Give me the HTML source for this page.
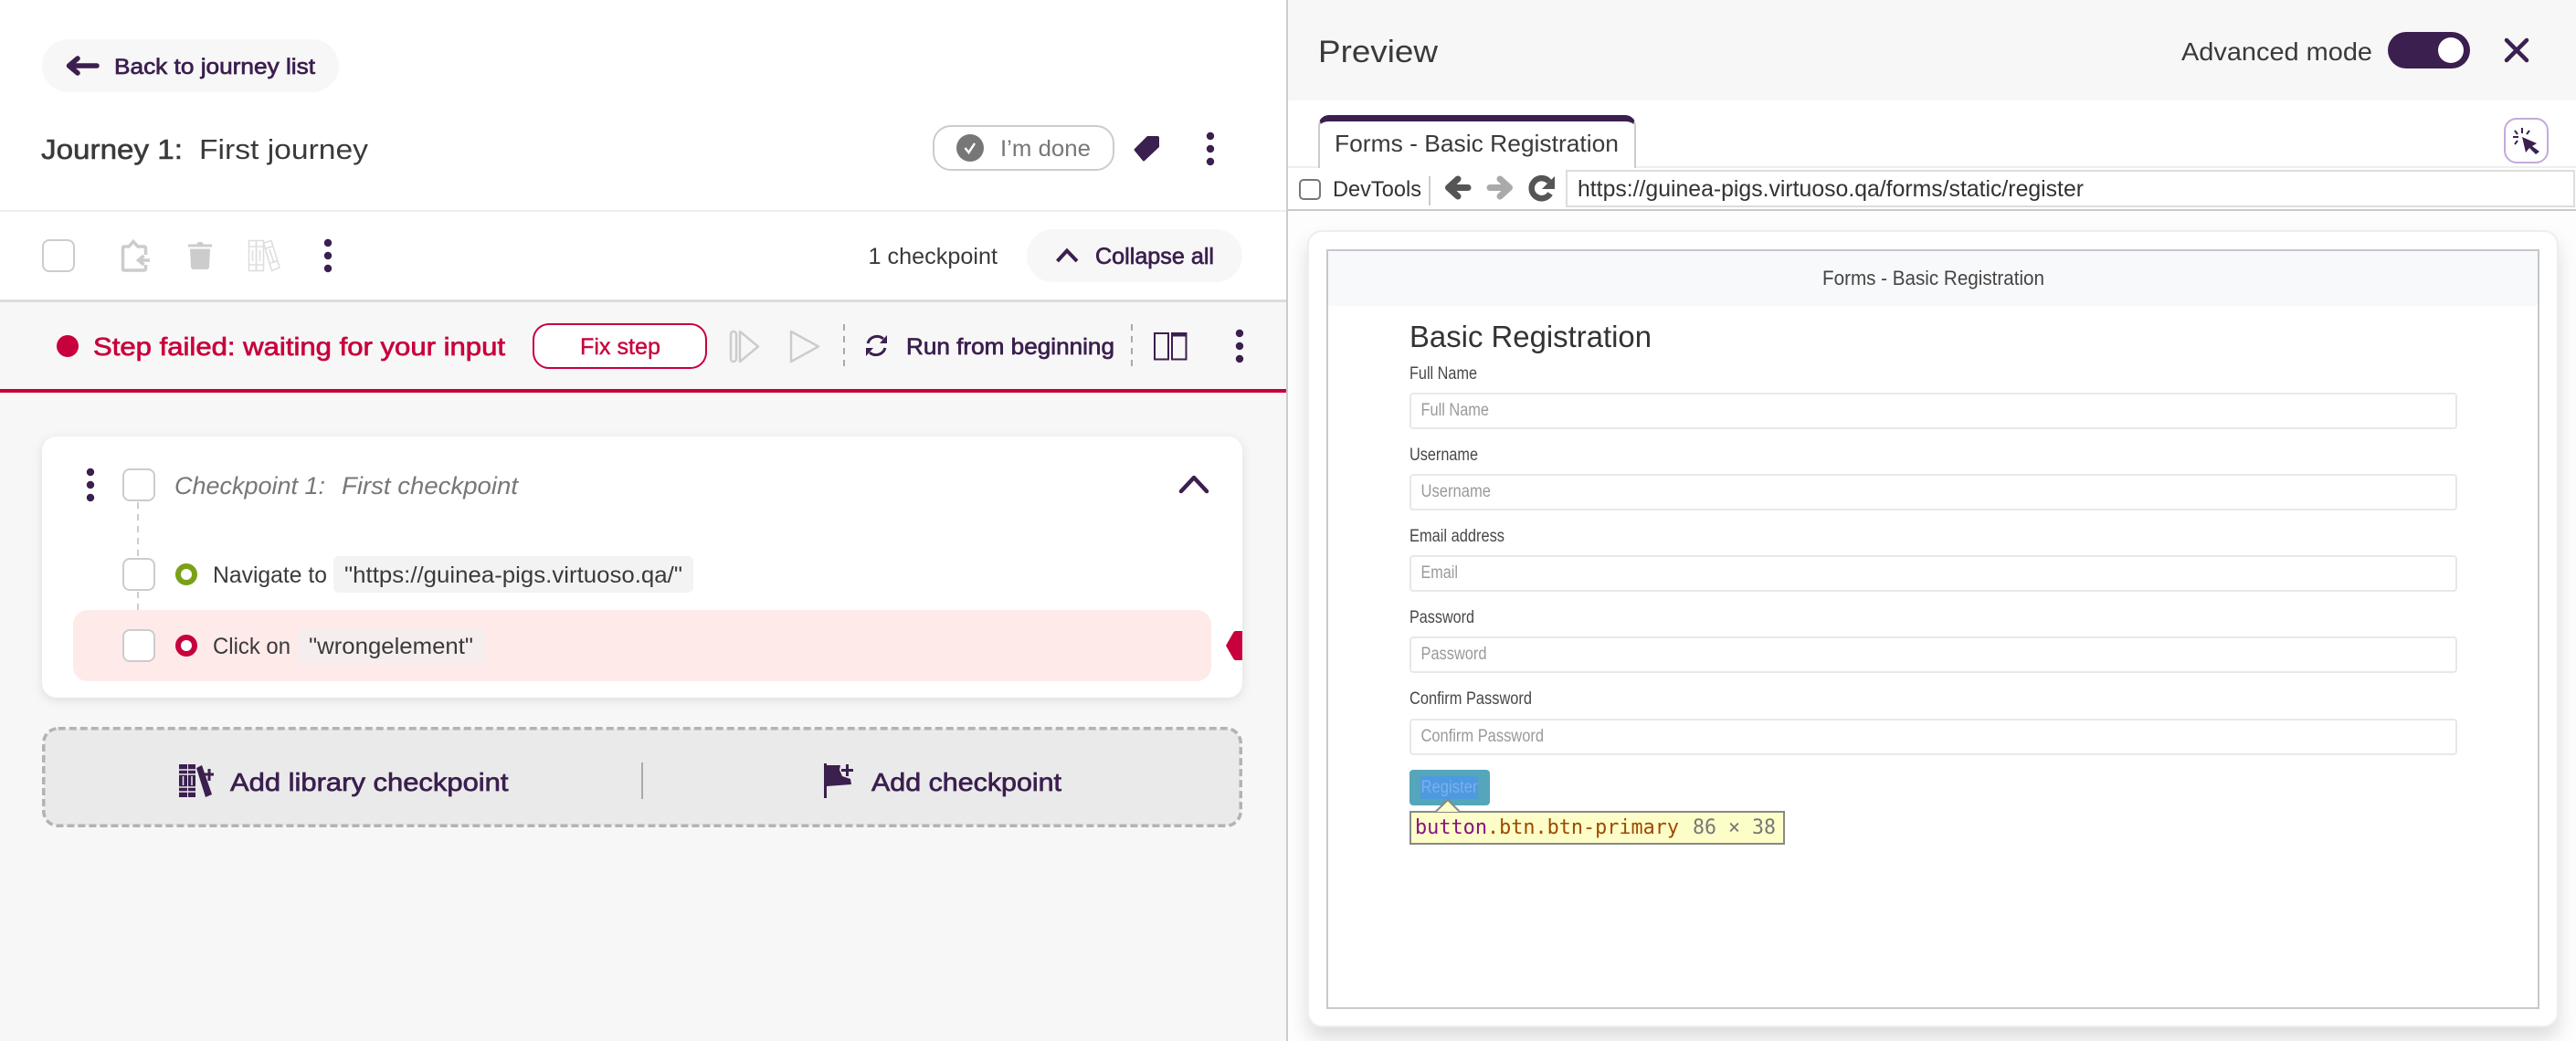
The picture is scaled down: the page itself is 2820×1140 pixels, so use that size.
<!DOCTYPE html>
<html><head><meta charset="utf-8"><title>Journey</title>
<style>
html,body{margin:0;padding:0;background:#f7f7f7}
body{width:2820px;height:1140px;position:relative;overflow:hidden;font-family:"Liberation Sans",sans-serif}
.b{position:absolute;box-sizing:border-box}
svg{position:absolute;left:0;top:0}
text{font-family:"Liberation Sans",sans-serif;white-space:pre}
.p{fill:#3b1f4f}.d{fill:#3a3a3a}.g{fill:#777}.r{fill:#c8003c}
.sp{stroke:#3b1f4f;stroke-width:.7}.sd{stroke:#3a3a3a;stroke-width:.6}.sr{stroke:#c8003c;stroke-width:.7}
.f{fill:#484848;font-size:19px}.h{fill:#9a9a9a;font-size:19px}
.m{font-family:"DejaVu Sans Mono",monospace;font-size:22px}
.cb{border:2.5px solid #ccc;border-radius:8px;background:#fff;width:36px;height:36px}
.inp{left:1543px;width:1147px;height:40px;border:2px solid #e8e8e8;border-radius:4px;background:#fff}
</style></head><body>
<!-- left -->
<div class="b" style="left:0;top:0;width:1408px;height:328px;background:#fff"></div>
<div class="b" style="left:0;top:230px;width:1408px;height:2px;background:#eee"></div>
<div class="b" style="left:0;top:328px;width:1408px;height:3px;background:#ddd"></div>
<div class="b" style="left:0;top:426px;width:1408px;height:4px;background:#c8003c"></div>
<div class="b" style="left:46px;top:43px;width:325px;height:58px;border-radius:29px;background:#f7f7f7"></div>
<div class="b" style="left:1021px;top:137px;width:199px;height:50px;border:2.5px solid #ccc;border-radius:20px;background:#fff"></div>
<div class="b cb" style="left:46px;top:262px"></div>
<div class="b" style="left:1124px;top:251px;width:236px;height:58px;border-radius:29px;background:#f7f7f7"></div>
<div class="b" style="left:583px;top:354px;width:191px;height:50px;border:2.5px solid #c8003c;border-radius:18px;background:#fff"></div>
<div class="b" style="left:46px;top:478px;width:1314px;height:286px;border-radius:16px;background:#fff;box-shadow:0 3px 12px rgba(0,0,0,.1)"></div>
<div class="b" style="left:80px;top:668px;width:1246px;height:78px;border-radius:16px;background:#ffeaea"></div>
<div class="b cb" style="left:134px;top:513px"></div>
<div class="b cb" style="left:134px;top:611px"></div>
<div class="b cb" style="left:134px;top:689px"></div>
<div class="b" style="left:365px;top:609px;width:394px;height:40px;border-radius:6px;background:#f3f3f3"></div>
<div class="b" style="left:326px;top:687px;width:205px;height:40px;border-radius:6px;background:#f6eeee"></div>
<!-- right -->
<div class="b" style="left:1410px;top:0;width:1410px;height:1140px;background:#fdfdfd"></div>
<div class="b" style="left:1408px;top:0;width:2px;height:1140px;background:#ccc"></div>
<div class="b" style="left:1410px;top:0;width:1410px;height:110px;background:#f7f7f7"></div>
<div class="b" style="left:1410px;top:110px;width:1410px;height:120px;background:#fff"></div>
<div class="b" style="left:1410px;top:182px;width:1410px;height:2px;background:#eee"></div>
<div class="b" style="left:1410px;top:229px;width:1410px;height:2px;background:#cacacf"></div>
<div class="b" style="left:1443px;top:126px;width:348px;height:58px;border:2px solid #ccc;border-top:7px solid #3b1f4f;border-bottom:0;border-radius:12px 12px 0 0;background:#fff"></div>
<div class="b" style="left:2741px;top:129px;width:49px;height:50px;border:2px solid #c5a9dc;border-radius:14px;background:#fff"></div>
<div class="b" style="left:1422px;top:196px;width:24px;height:23px;border:2px solid #777;border-radius:5px;background:#fff"></div>
<div class="b" style="left:1564px;top:193px;width:2px;height:32px;background:#ccc"></div>
<div class="b" style="left:1714px;top:186px;width:1105px;height:41px;border:2px solid #ddd;background:#fff"></div>
<div class="b" style="left:1431px;top:252px;width:1370px;height:873px;border:2px solid #eee;border-radius:16px;background:#fff;box-shadow:0 12px 20px rgba(0,0,0,.13)"></div>
<div class="b" style="left:1452px;top:273px;width:1328px;height:832px;border:2px solid #c8c8ce;background:#fff"></div>
<div class="b" style="left:1454px;top:275px;width:1324px;height:58px;background:#f8f9fb;box-shadow:0 1px 3px rgba(0,0,0,.05)"></div>
<div class="b inp" style="top:430px"></div>
<div class="b inp" style="top:519px"></div>
<div class="b inp" style="top:608px"></div>
<div class="b inp" style="top:697px"></div>
<div class="b inp" style="top:787px"></div>
<div class="b" style="left:1543px;top:843px;width:88px;height:39px;border-radius:4px;background:#55a5bb"></div>
<div class="b" style="left:1555px;top:850px;width:63px;height:25px;background:#4e9ae0"></div>
<div class="b" style="left:1543px;top:888px;width:411px;height:37px;border:2px solid #888;background:#fdfdc8"></div>

<svg width="2820" height="1140" viewBox="0 0 2820 1140" xmlns="http://www.w3.org/2000/svg">
<!-- back arrow -->
<path d="M106 72 H77 M85 64 L75.500 72 L85 80" fill="none" stroke="#3b1f4f" stroke-width="5.500" stroke-linecap="round" stroke-linejoin="round"/>
<text x="125" y="81" font-size="24" class="p sp" textLength="220" lengthAdjust="spacingAndGlyphs">Back to journey list</text>
<text x="45" y="174" font-size="31" class="d sd" textLength="155" lengthAdjust="spacingAndGlyphs">Journey 1:</text>
<text x="218" y="174" font-size="31" class="d" textLength="185" lengthAdjust="spacingAndGlyphs">First journey</text>
<!-- done -->
<circle cx="1062" cy="162" r="15" fill="#777"/>
<path d="M1056.500 162 L1060.500 167 L1067 157" fill="none" stroke="#fff" stroke-width="2.500"/>
<text x="1095" y="171" font-size="25" class="g" textLength="99" lengthAdjust="spacingAndGlyphs">I’m done</text>
<path d="M1256 149 H1267 Q1269 149 1269 151 V161 L1253 176 Q1252 177 1251 176 L1242 165 Q1241 164 1242 163 Z" fill="#3b1f4f"/>
<g fill="#3b1f4f"><circle cx="1325" cy="149" r="4.200"/><circle cx="1325" cy="163" r="4.200"/><circle cx="1325" cy="177" r="4.200"/>
<circle cx="359" cy="266" r="4.200"/><circle cx="359" cy="280" r="4.200"/><circle cx="359" cy="294" r="4.200"/>
<circle cx="1357" cy="365" r="4.200"/><circle cx="1357" cy="379" r="4.200"/><circle cx="1357" cy="393" r="4.200"/>
<circle cx="99" cy="517" r="4.200"/><circle cx="99" cy="531" r="4.200"/><circle cx="99" cy="545" r="4.200"/></g>
<!-- toolbar icons -->
<path d="M159.500 279 V272 Q159.500 270 157.500 270 H151 L146 264.500 L141 270 H136 Q134.500 270 134.500 272 V294 Q134.500 296 136 296 H157.500 Q159.500 296 159.500 294 V290" fill="none" stroke="#ccc" stroke-width="3.500"/>
<path d="M164 285 H153 M157.500 280 L151.500 285 L157.500 290" fill="none" stroke="#ccc" stroke-width="3.500"/>
<path d="M206 267.500 H215 L217 265 H221 L223 267.500 H232 V270.500 H206 Z M208 272.500 H230 L229 292 Q229 295 226 295 H212 Q209 295 209 292 Z" fill="#ccc"/>
<g fill="none" stroke="#ddd" stroke-width="1.500"><rect x="272.500" y="263.500" width="8" height="33"/><rect x="280.500" y="263.500" width="8" height="33"/>
<path d="M272 270 H289 M272 290 H289 M276.500 274 V286 M284.500 274 V286"/><path d="M288.500 266 L297 263.500 L306 293 L297.500 296.500 Z M291 272 L299 269.500 M296 288 L304 285.500 M295 273 L300 288"/></g>
<text x="950.500" y="289" font-size="25" class="d" textLength="141.500" lengthAdjust="spacingAndGlyphs">1 checkpoint</text>
<path d="M1157.500 286 L1168 274.500 L1179 286" fill="none" stroke="#3b1f4f" stroke-width="4"/>
<text x="1199" y="289" font-size="25" class="p sp" textLength="130" lengthAdjust="spacingAndGlyphs">Collapse all</text>
<!-- status bar -->
<ellipse cx="74" cy="379" rx="12" ry="12" fill="#c8003c"/>
<text x="102" y="389" font-size="28" class="r sr" textLength="451" lengthAdjust="spacingAndGlyphs">Step failed: waiting for your input</text>
<text x="635" y="388" font-size="25" class="r sr" style="stroke-width:.4" textLength="88" lengthAdjust="spacingAndGlyphs">Fix step</text>
<g fill="none" stroke="#ccc" stroke-width="2.500" stroke-linejoin="round"><rect x="800" y="363" width="6" height="33" rx="3"/><path d="M810 363 L830 379.500 L810 396 Z"/><path d="M866 363 L896 379.500 L866 396 Z"/></g>
<path d="M924 355 V403 M1239 355 V403" stroke="#aaa" stroke-width="2" stroke-dasharray="7 6"/>
<g fill="none" stroke="#3b1f4f" stroke-width="3"><path d="M950 376 A10.500 10.500 0 0 1 967 371"/><path d="M969 381 A10.500 10.500 0 0 1 952 386"/></g>
<path d="M971 367 V376 H963 Z M948 390 V381 H956 Z" fill="#3b1f4f"/>
<text x="992" y="388" font-size="25" class="p sp" textLength="228" lengthAdjust="spacingAndGlyphs">Run from beginning</text>
<g fill="none" stroke="#3b1f4f" stroke-width="2"><rect x="1264" y="365" width="15" height="28.500"/><rect x="1283" y="365" width="15.500" height="28.500"/></g><rect x="1282" y="364" width="17.500" height="4.500" fill="#3b1f4f"/>
<!-- card -->
<text x="191" y="541" font-size="27" class="g" font-style="italic" textLength="165" lengthAdjust="spacingAndGlyphs">Checkpoint 1:</text>
<text x="374" y="541" font-size="27" class="g" font-style="italic" textLength="193" lengthAdjust="spacingAndGlyphs">First checkpoint</text>
<path d="M1293 538 L1307 523 L1321 538" fill="none" stroke="#3b1f4f" stroke-width="4.500" stroke-linejoin="round" stroke-linecap="round"/>
<path d="M151 550 V611 M151 648 V668" stroke="#ccc" stroke-width="2" stroke-dasharray="7 6"/>
<circle cx="204" cy="629" r="9" fill="#fff" stroke="#7aa116" stroke-width="6"/>
<text x="233" y="638" font-size="25" class="d" textLength="125" lengthAdjust="spacingAndGlyphs">Navigate to</text>
<text x="377" y="638" font-size="25" class="d" textLength="370" lengthAdjust="spacingAndGlyphs">"https://guinea-pigs.virtuoso.qa/"</text>
<circle cx="204" cy="707" r="9" fill="#fff" stroke="#c8003c" stroke-width="6"/>
<text x="233" y="716" font-size="25" class="d" textLength="85" lengthAdjust="spacingAndGlyphs">Click on</text>
<text x="338" y="716" font-size="25" class="d" textLength="180" lengthAdjust="spacingAndGlyphs">"wrongelement"</text>
<path d="M1360 691 H1353 Q1351 691 1350 693 L1342 707 L1350 721 Q1351 723 1353 723 H1360 Z" fill="#c8003c"/>
<!-- add -->
<rect x="47.750" y="797.750" width="1310.500" height="106.500" rx="16" fill="#eaeaea" stroke="#b3b3b3" stroke-width="3.500" stroke-dasharray="8 4"/>
<g fill="#3b1f4f"><rect x="196" y="837" width="9" height="36"/><rect x="206" y="837" width="8" height="36"/></g>
<path d="M196 843 H214 M196 848 H214 M196 862 H214 M196 867 H214" stroke="#eaeaea" stroke-width="1.500"/><path d="M200.500 850 V860 M210 850 V860" stroke="#eaeaea" stroke-width="1.500"/>
<path d="M215 841 L221 838 L232 870 L225 873 Z" fill="#3b1f4f"/>
<path d="M223.500 848 H234 M229 842 V855" stroke="#3b1f4f" stroke-width="3"/>
<text x="252" y="866" font-size="28" class="p sp" textLength="304.500" lengthAdjust="spacingAndGlyphs">Add library checkpoint</text>
<rect x="702" y="835" width="2" height="40" fill="#aaa"/>
<path d="M902 836 H905 V874 H902 Z M905 838 H920 L919 843 L922 850 L931 853 L932 859 L905 861 Z" fill="#3b1f4f"/>
<path d="M921 843.500 H934 M927.500 837 V850" stroke="#3b1f4f" stroke-width="3"/>
<text x="954" y="866" font-size="28" class="p sp" textLength="208" lengthAdjust="spacingAndGlyphs">Add checkpoint</text>
<!-- preview header -->
<text x="1443" y="68" font-size="34" class="d" textLength="131" lengthAdjust="spacingAndGlyphs">Preview</text>
<text x="2388" y="66" font-size="28" class="d" textLength="209" lengthAdjust="spacingAndGlyphs">Advanced mode</text>
<rect x="2614" y="35" width="90" height="40" rx="20" fill="#3b1f4f"/><circle cx="2683" cy="55" r="14" fill="#fff"/>
<path d="M2744 44 L2766 66 M2766 44 L2744 66" stroke="#3b1f4f" stroke-width="4.500" stroke-linecap="round"/>
<text x="1461" y="166" font-size="26" class="d" textLength="311" lengthAdjust="spacingAndGlyphs">Forms - Basic Registration</text>
<path d="M2761 140 V146 M2751 150 H2757 M2753 143 L2756 147 M2769 143 L2766 147 M2753 158 L2756 154" stroke="#3b1f4f" stroke-width="2"/>
<path d="M2761 150 L2777 157 L2772 160 L2780 166 L2776 169 L2769 162 L2765 167 Z" fill="#3b1f4f"/>
<!-- browser bar -->
<text x="1459" y="215" font-size="24" fill="#333" textLength="97" lengthAdjust="spacingAndGlyphs">DevTools</text>
<path d="M1607 205.500 H1587 M1596 196 L1585.500 205.500 L1596 215" fill="none" stroke="#555" stroke-width="7" stroke-linecap="round" stroke-linejoin="round"/>
<path d="M1631 205.500 H1651 M1642 196 L1652.500 205.500 L1642 215" fill="none" stroke="#aaa" stroke-width="7" stroke-linecap="round" stroke-linejoin="round"/>
<path d="M1696 199 A11 11 0 1 0 1697 212" fill="none" stroke="#555" stroke-width="6.500"/>
<path d="M1702 193 V207 H1688 Z" fill="#555"/>
<text x="1727" y="215" font-size="25" fill="#333" textLength="554" lengthAdjust="spacingAndGlyphs">https://guinea-pigs.virtuoso.qa/forms/static/register</text>
<!-- page -->
<text x="1995" y="312" font-size="22" fill="#444" textLength="243" lengthAdjust="spacingAndGlyphs">Forms - Basic Registration</text>
<text x="1543" y="380" font-size="33" fill="#333" textLength="265" lengthAdjust="spacingAndGlyphs">Basic Registration</text>
<text x="1543" y="415" class="f" textLength="74" lengthAdjust="spacingAndGlyphs">Full Name</text>
<text x="1555.500" y="455" class="h" textLength="74.500" lengthAdjust="spacingAndGlyphs">Full Name</text>
<text x="1543" y="504" class="f" textLength="75" lengthAdjust="spacingAndGlyphs">Username</text>
<text x="1555.500" y="544" class="h" textLength="76.500" lengthAdjust="spacingAndGlyphs">Username</text>
<text x="1543" y="593" class="f" textLength="104" lengthAdjust="spacingAndGlyphs">Email address</text>
<text x="1555.500" y="633" class="h" textLength="40.500" lengthAdjust="spacingAndGlyphs">Email</text>
<text x="1543" y="682" class="f" textLength="71" lengthAdjust="spacingAndGlyphs">Password</text>
<text x="1555.500" y="722" class="h" textLength="72" lengthAdjust="spacingAndGlyphs">Password</text>
<text x="1543" y="771" class="f" textLength="134" lengthAdjust="spacingAndGlyphs">Confirm Password</text>
<text x="1555.500" y="812" class="h" textLength="134.500" lengthAdjust="spacingAndGlyphs">Confirm Password</text>
<text x="1555.500" y="868" font-size="19" fill="#7bb0ec" textLength="62" lengthAdjust="spacingAndGlyphs">Register</text>
<!-- tooltip -->
<path d="M1571.500 889 L1585 876 L1598 889" fill="#fdfdc8" stroke="#888" stroke-width="2"/>
<text x="1549" y="913" class="m" fill="#881280" textLength="79" lengthAdjust="spacingAndGlyphs">button</text>
<text x="1628" y="913" class="m" fill="#9c4a00" textLength="210" lengthAdjust="spacingAndGlyphs">.btn.btn-primary</text>
<text x="1853" y="913" class="m" fill="#777" textLength="91" lengthAdjust="spacingAndGlyphs">86 × 38</text>
</svg>
</body></html>
